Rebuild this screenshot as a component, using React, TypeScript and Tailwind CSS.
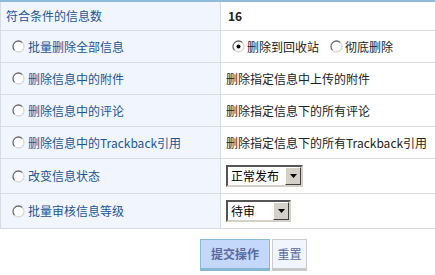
import React from "react";

const font = { fontFamily: '"Noto Sans CJK SC", "Liberation Sans", sans-serif' };

function Radio({ checked = false }: { checked?: boolean }) {
  return (
    <svg width="13" height="13" viewBox="0 0 13 13" className="shrink-0">
      <circle cx="6.5" cy="6.5" r="5.5" fill="#ffffff" />
      <path d="M2.6 10.4 A5.5 5.5 0 0 1 10.4 2.6" fill="none" stroke="#6b6b6b" strokeWidth="1.3" />
      <path d="M10.4 2.6 A5.5 5.5 0 0 1 2.6 10.4" fill="none" stroke="#d8d8d0" strokeWidth="1.3" />
      {checked && <circle cx="6.5" cy="6.5" r="2" fill="#000" />}
    </svg>
  );
}

function Select({ label, width }: { label: string; width: string }) {
  return (
    <div className={`flex h-[22px] ${width} border-2 border-t-[#555] border-l-[#555] border-r-[#d4d0c8] border-b-[#d4d0c8] bg-white`}>
      <div className="flex-1 flex items-center pl-[3px] text-[12px] text-black leading-none">{label}</div>
      <div className="w-[16px] h-full bg-[#d4d0c8] border border-t-[#fff] border-l-[#fff] border-r-[#404040] border-b-[#404040] flex items-center justify-center">
        <svg width="7" height="4" viewBox="0 0 7 4"><path d="M0 0 H7 L3.5 4 Z" fill="#000" /></svg>
      </div>
    </div>
  );
}

function Row({ left, right, h, radio = true }: { left: string; right: React.ReactNode; h: string; radio?: boolean }) {
  return (
    <div className={`flex ${h} border-b border-[#d6dbe6] whitespace-nowrap`}>
      <div className="w-[221px] shrink-0 bg-[#f1f6fe] border-l border-r border-[#d6dbe6] flex items-center text-[#1c5598] text-[12px]">
        {radio ? (
          <div className="flex items-center pl-[11px] gap-[3px]">
            <Radio />
            <span>{left}</span>
          </div>
        ) : (
          <span className="pl-[5px]">{left}</span>
        )}
      </div>
      <div className="flex-1 bg-white flex items-center pl-[5px] text-[12px] text-[#222]">{right}</div>
    </div>
  );
}

export default function App() {
  return (
    <div className="w-[435px] h-[275px] bg-white overflow-hidden" style={font}>
      <div className="h-[2px] bg-[#8dbbd9]" />
      <Row h="h-[29px]" radio={false} left="符合条件的信息数" right={<span className="font-bold pl-[2px]">16</span>} />
      <Row
        h="h-[32px]"
        left="批量删除全部信息"
        right={
          <div className="flex items-center pl-[6px]">
            <Radio checked />
            <span className="ml-[2px]">删除到回收站</span>
            <span className="ml-[11px] flex items-center"><Radio /></span>
            <span className="ml-[2px]">彻底删除</span>
          </div>
        }
      />
      <Row h="h-[32px]" left="删除信息中的附件" right="删除指定信息中上传的附件" />
      <Row h="h-[32px]" left="删除信息中的评论" right="删除指定信息下的所有评论" />
      <Row h="h-[32px]" left="删除信息中的Trackback引用" right="删除指定信息下的所有Trackback引用" />
      <Row h="h-[35px]" left="改变信息状态" right={<Select label="正常发布" width="w-[77px]" />} />
      <Row h="h-[35px]" left="批量审核信息等级" right={<Select label="待审" width="w-[65px]" />} />
      <div className="flex gap-[2px] pt-[10px] pl-[200px]">
        <button className="w-[70px] h-[32px] bg-[#c4d8fc] border border-[#88bad6] border-b-[3px] border-b-[#84b8d4] text-[#5a6a9e] font-bold text-[12px]" style={font}>
          提交操作
        </button>
        <button className="w-[35px] h-[32px] bg-[#f1f6fe] border border-[#cccccc] border-b-[3px] border-b-[#c8c8c8] text-[#5a6a9e] text-[12px]" style={font}>
          重置
        </button>
      </div>
    </div>
  );
}
